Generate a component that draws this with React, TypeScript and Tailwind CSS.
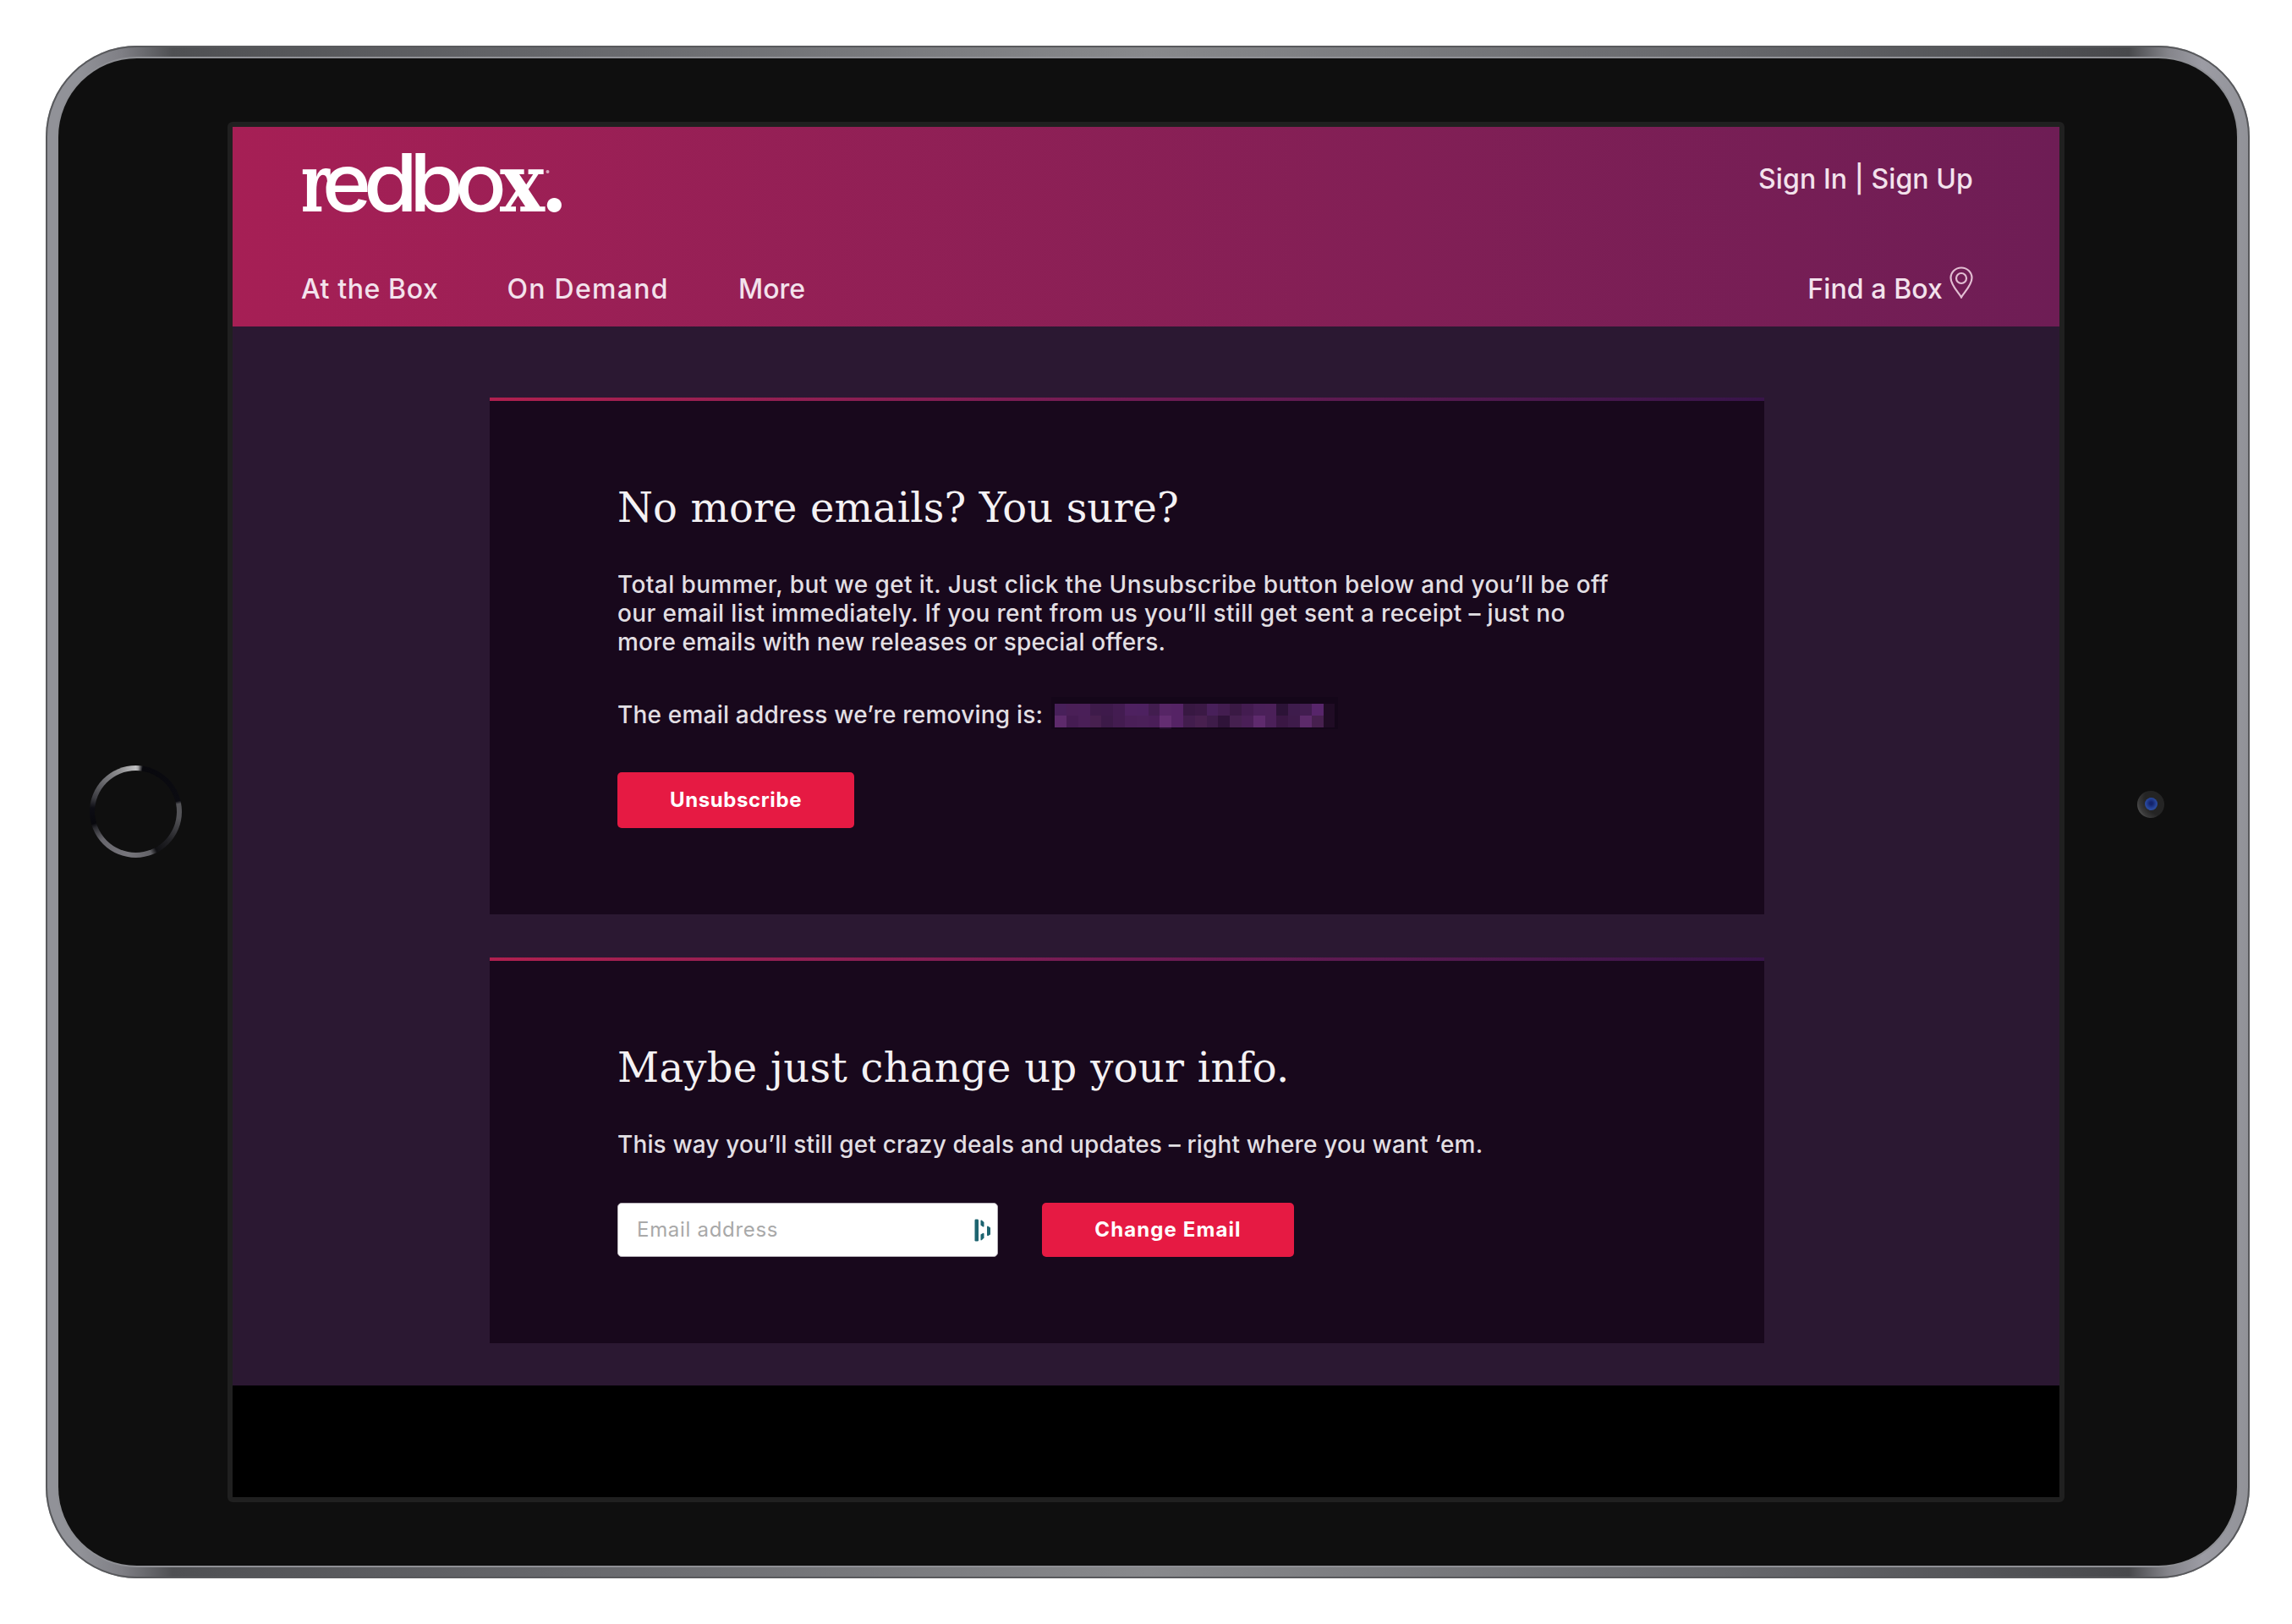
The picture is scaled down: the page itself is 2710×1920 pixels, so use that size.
import { useState } from 'react';
import type { ReactNode } from 'react';

const NAV_ITEMS = [
  { label: 'At the Box', className: 'tracking-[0.6px]' },
  { label: 'On Demand', className: 'tracking-[1.3px] ml-[81px]' },
  { label: 'More', className: 'tracking-[0px] ml-[82px]' },
];

// two rows of blocks that hide the subscriber's address
const MASK_ROWS = [
  ['#48205a', '#4a1f57', '#4a1f58', '#3e1b4a', '#3e1a4b', '#431c51', '#4e2160', '#4d2160', '#421d4f', '#562565', '#552365', '#381842', '#3b1945', '#48205a', '#431d50', '#3a1944', '#431c50', '#4a2059', '#4b2059', '#2c1337', '#3e1c4c', '#421d50', '#57256a'],
  ['#5d2a6b', '#451c52', '#4a1f57', '#47204f', '#3c1a48', '#431c50', '#4a1f58', '#4b2059', '#4a1e58', '#632d71', '#552365', '#421d4d', '#48204f', '#3e1c49', '#2f1339', '#45204f', '#4a1f57', '#5e2a6d', '#4b2059', '#3a1744', '#3e1b4a', '#5c2a6a', '#47204f'],
];

function RedboxLogo() {
  return (
    <svg width="312" height="100" viewBox="0 0 312 100" className="overflow-visible fill-white" aria-label="redbox.">
      <g className='font-["DejaVu_Serif"] font-bold' fontSize="96">
        <text x="0" y="80" textLength="34" lengthAdjust="spacingAndGlyphs">r</text>
        <text x="235" y="80" textLength="53" lengthAdjust="spacingAndGlyphs">x</text>
      </g>
      <g className="font-[Inter] font-medium" fontSize="95">
        <text x="25" y="80" textLength="58" lengthAdjust="spacingAndGlyphs">e</text>
        <text x="74" y="80" textLength="64" lengthAdjust="spacingAndGlyphs">d</text>
        <text x="128" y="80" textLength="64" lengthAdjust="spacingAndGlyphs">b</text>
        <text x="182" y="80" textLength="61" lengthAdjust="spacingAndGlyphs">o</text>
        <text x="282" y="80" className="font-semibold" fontSize="109">.</text>
      </g>
      <circle cx="291.500" cy="33" r="2" fillOpacity="0.6" />
    </svg>
  );
}

function PinIcon() {
  return (
    <svg width="28" height="38" viewBox="0 0 28 38" fill="none" stroke="#e2bdd2" strokeWidth="2.2">
      <path d="M14 36.500C11.500 31.500 1.500 22.500 1.500 13.500A12.500 12 0 0 1 26.500 13.500C26.500 22.500 16.500 31.500 14 36.500Z" />
      <circle cx="14" cy="14" r="6" />
    </svg>
  );
}

function DashlaneIcon() {
  return (
    <svg width="20" height="27" viewBox="0 0 20 27" fill="#1d6470">
      <rect x="0.500" y="0.500" width="4.500" height="26" rx="1.200" />
      <path d="M7.500 2.500Q7.500 1 9 1.800L11.500 4V8.500Q11.500 10 10 9.300L7.500 7.500Z" />
      <path d="M7.500 18.500L10 17Q11.500 16.200 11.500 17.700V22.500L9 25Q7.500 26 7.500 24.500Z" />
      <path d="M15 9.500Q15 8 16.500 8.800L19 10.500V18.500L16.500 20Q15 20.500 15 19Z" />
    </svg>
  );
}

function Card({ title, titleClass, className, children }: { title: string; titleClass: string; className: string; children: ReactNode }) {
  return (
    <section className={`w-[1507px] bg-[#18081c] ${className}`}>
      <div className="h-1 bg-linear-to-r from-[#b0204f] via-[#701b54] to-[#38144a]" />
      <div className="pt-24 pl-[151px]">
        <h2 className={`font-["DejaVu_Serif",serif] text-[48px] leading-[60px] text-[#f4f2f4] whitespace-nowrap ${titleClass}`}>{title}</h2>
        {children}
      </div>
    </section>
  );
}

function MaskedEmail() {
  return (
    <span className="ml-[10px] -mt-[4px] flex flex-col bg-[#140619] px-1 pt-2 pb-[13px]">
      {MASK_ROWS.map((row, i) => (
        <span key={i} className="flex">
          {row.map((color, j) => (
            <span key={j} className="h-[14px] w-[13.8px]" style={{ backgroundColor: color }} />
          ))}
          <span className="h-[14px] w-[13px] bg-[#200c25]" />
        </span>
      ))}
      <span className="-mb-[13px] ml-[124px] h-[13px] w-[14px] bg-[#220d2a]" />
    </span>
  );
}

function HomeButton() {
  return (
    <div className="size-[109px] rounded-full bg-[conic-gradient(from_0deg,#c0c0c2_0deg,#a8a8aa_3deg,#08080d_9deg,#0b0b11_76deg,#535357_80deg,#535357_98deg,#222226_130deg,#101013_152deg,#626267_160deg,#77767c_190deg,#67666c_230deg,#2d2d32_248deg,#08080d_254deg,#0d0d14_275deg,#3c3c41_288deg,#6e6e72_315deg,#929294_340deg,#c0c0c2_360deg)] p-[6px]">
      <div className="size-full rounded-full bg-[#0f0f0f]" />
    </div>
  );
}

function Camera() {
  return (
    <div className="flex size-8 items-center justify-center rounded-full bg-[radial-gradient(circle_at_95%_25%,#242424_55%,#3a3a3a_75%,#747474_100%)]">
      <div className="size-[15px] rounded-full bg-[radial-gradient(circle_at_50%_45%,#13236b_15%,#27459a_55%,#2c4f9c_80%,#24408a_100%)]" />
    </div>
  );
}

export default function App() {
  const [email, setEmail] = useState('');

  return (
    <div className="h-[1920px] w-[2710px] bg-white pt-[54px] pl-[54px] font-[Inter,sans-serif] antialiased">
      {/* aluminium rim */}
      <div className="h-[1812px] w-[2606px] rounded-[108px] bg-[linear-gradient(90deg,#919298_0px,#919298_40px,#7f7f85_90px,#4f5053_150px,#66676b_600px,#88898c_1303px,#66676b_2000px,#48494c_2463px,#85858b_2510px,#9c9ca4_2550px,#919298_2606px)] p-[15px] shadow-[inset_0_0_0_2px_#58595c]">
        <div className="flex size-full items-center rounded-[93px] bg-[#0f0f0f] shadow-[0_0_0_2px_#8f9095]">
          <div className="flex w-[200px] pb-[2px] pl-[37px]">
            <HomeButton />
          </div>

          <div className="h-[1632px] w-[2172px] rounded-md border-6 border-[#202020]">
            <div className="flex h-full flex-col overflow-hidden bg-[#2b1832]">
              <header className="h-[236px] bg-linear-to-r from-[#a61f55] to-[#6e1d55] pt-5 pr-[102px] pl-[81px] text-[32px] leading-10 text-[#f3e2ec]">
                <div className="flex h-[100px] justify-between">
                  <RedboxLogo />
                  <a className="mt-[22px] font-medium tracking-[0.1px] whitespace-nowrap">Sign In | Sign Up</a>
                </div>
                <nav className="mt-[52px] flex h-10 font-medium">
                  {NAV_ITEMS.map((item) => (
                    <a key={item.label} className={`whitespace-nowrap ${item.className}`}>{item.label}</a>
                  ))}
                  <a className="ml-auto flex gap-2 tracking-[0.1px] whitespace-nowrap">
                    Find a Box
                    <span className="-mt-[7px]">
                      <PinIcon />
                    </span>
                  </a>
                </nav>
              </header>

              <main className="flex h-[1252px] flex-col gap-[51px] pt-[84px] pl-[304px] text-[28px] leading-[34px] font-medium text-[#e2dfe3]">
                <Card title="No more emails? You sure?" titleClass="font-normal tracking-[0.1px]" className="h-[611px]">
                  <p className="mt-11 whitespace-nowrap">
                    <span className="block tracking-[0.4px]">Total bummer, but we get it. Just click the Unsubscribe button below and you’ll be off</span>
                    <span className="block tracking-[0.34px]">our email list immediately. If you rent from us you’ll still get sent a receipt – just no</span>
                    <span className="block tracking-[0.11px]">more emails with new releases or special offers.</span>
                  </p>
                  <div className="mt-[52px] flex h-[34px] whitespace-nowrap">
                    <span className="tracking-[0.2px]">The email address we’re removing is:</span>
                    <MaskedEmail />
                  </div>
                  <button type="button" className="mt-[51px] flex h-[66px] w-[280px] items-center justify-center rounded-[5px] bg-[#e61a43] text-2xl font-bold tracking-[0.6px] text-white">
                    Unsubscribe
                  </button>
                </Card>

                <Card title="Maybe just change up your info." titleClass="font-normal tracking-[0.3px]" className="h-[456px]">
                  <p className="mt-11 tracking-[0.14px] whitespace-nowrap">This way you’ll still get crazy deals and updates – right where you want ‘em.</p>
                  <form className="mt-[52px] flex h-16 gap-[52px]">
                    <label className="flex w-[450px] items-center rounded-[5px] border border-[#b9b4bb] bg-white pr-[7px] pl-[22px]">
                      <input
                        value={email}
                        onChange={(e) => setEmail(e.target.value)}
                        placeholder="Email address"
                        className="min-w-0 flex-1 text-2xl font-normal tracking-[0.7px] text-gray-800 outline-none placeholder:text-[#a9a9a9]"
                      />
                      <DashlaneIcon />
                    </label>
                    <button type="button" className="flex w-[298px] items-center justify-center rounded-[5px] bg-[#e61a43] text-2xl font-bold tracking-[1.1px] text-white">
                      Change Email
                    </button>
                  </form>
                </Card>
              </main>

              <footer className="flex-1 bg-black" />
            </div>
          </div>

          <div className="flex flex-1 pb-[19px] pl-[86px]">
            <Camera />
          </div>
        </div>
      </div>
    </div>
  );
}
